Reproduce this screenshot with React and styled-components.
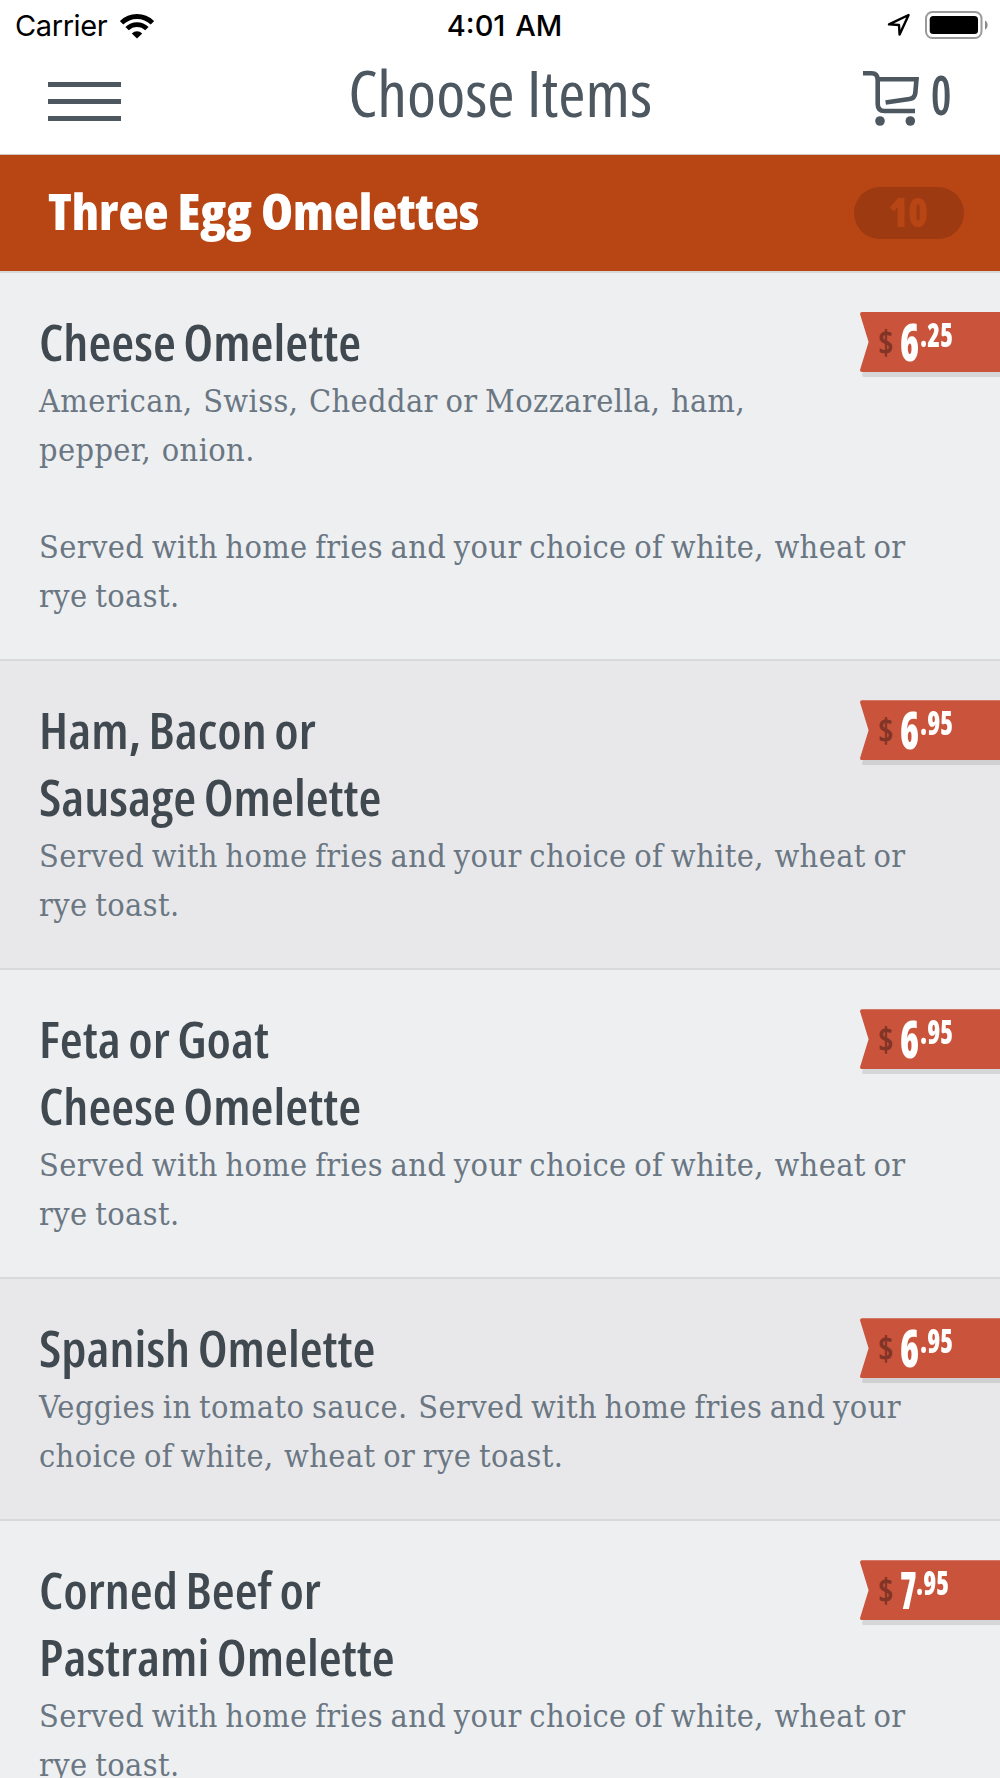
import React from "react";
import styled, { createGlobalStyle } from "styled-components";

const SERVED =
  "Served with home fries and your choice of white, wheat or\nrye toast.";

const items = [
  {
    name: "Cheese Omelette",
    desc:
      "American, Swiss, Cheddar or Mozzarella, ham,\npepper, onion.\n\n" + SERVED,
    dollars: "6",
    cents: ".25",
  },
  {
    name: "Ham, Bacon or\nSausage Omelette",
    desc: SERVED,
    dollars: "6",
    cents: ".95",
  },
  {
    name: "Feta or Goat\nCheese Omelette",
    desc: SERVED,
    dollars: "6",
    cents: ".95",
  },
  {
    name: "Spanish Omelette",
    desc:
      "Veggies in tomato sauce. Served with home fries and your\nchoice of white, wheat or rye toast.",
    dollars: "6",
    cents: ".95",
  },
  {
    name: "Corned Beef or\nPastrami Omelette",
    desc: SERVED,
    dollars: "7",
    cents: ".95",
  },
];

function WifiIcon() {
  return (
    <svg width="34" height="25" viewBox="0 0 34 25">
      <g fill="none" stroke="#000" strokeWidth="4.8">
        <path d="M1.6 8.8 A22 22 0 0 1 32.4 8.8" />
        <path d="M7.1 14.6 A14.2 14.2 0 0 1 26.9 14.6" />
      </g>
      <path d="M11.8 19.4 A7.6 7.6 0 0 1 22.2 19.4 L17 24.6 Z" />
    </svg>
  );
}

function LocationIcon() {
  return (
    <svg width="24" height="24" viewBox="0 0 24 24">
      <path
        d="M21.6 2 L2 11.4 L12 12 L12.6 21.6 Z"
        fill="none"
        stroke="#000"
        strokeWidth="2.4"
        strokeLinejoin="round"
      />
    </svg>
  );
}

function BatteryIcon() {
  return (
    <svg width="64" height="28" viewBox="0 0 64 28">
      <rect x="1" y="1" width="55.5" height="26" rx="6.5" fill="#fff" stroke="#9a9a9a" strokeWidth="2" />
      <rect x="4.7" y="4.9" width="48.3" height="18.2" rx="3.6" />
      <path d="M60 9.4 A5.5 5.5 0 0 1 60 18.8 Z" fill="#8a8a8a" />
    </svg>
  );
}

function CartIcon() {
  return (
    <svg width="58" height="58" viewBox="0 0 58 58">
      <g fill="none" stroke="#4d575f" strokeWidth="4.6">
        <path d="M0 3.3 H8.5 Q14.7 3.3 14.7 10 V34 Q14.7 41 21.5 41 H52" />
        <path d="M14.7 9.3 H53.5 L52.3 23 Q51.8 28.2 46.5 29 L22.6 32.6" />
      </g>
      <circle cx="17" cy="51" r="4.8" fill="#4d575f" />
      <circle cx="47.3" cy="51" r="4.8" fill="#4d575f" />
    </svg>
  );
}

// a little extra room after a comma or full stop
function Description({ text }) {
  return (
    <Desc>
      {text.split("\n").map((line, n) => (
        <DescLine key={n}>
          {line.split(/(?<=[,.] )/).map((part, i) => (
            <Phrase key={i} $first={i === 0}>
              {part}
            </Phrase>
          ))}
        </DescLine>
      ))}
    </Desc>
  );
}

function Item({ item }) {
  return (
    <ItemRow>
      <ItemName>{item.name}</ItemName>
      <Description text={item.desc} />
      <PriceTag>
        <Ribbon>
          <Currency>$</Currency>
          <Dollars $narrow={item.dollars === "7"}>{item.dollars}</Dollars>
          <Cents>{item.cents}</Cents>
        </Ribbon>
      </PriceTag>
    </ItemRow>
  );
}

function App() {
  return (
    <Screen>
      <GlobalStyle />
      <StatusBar>
        <Carrier>
          Carrier
          <WifiIcon />
        </Carrier>
        <Clock>4:01 AM</Clock>
        <StatusIcons>
          <LocationIcon />
          <BatteryIcon />
        </StatusIcons>
      </StatusBar>
      <Navbar>
        <MenuButton aria-label="Menu">
          <span />
          <span />
          <span />
        </MenuButton>
        <PageTitle>Choose Items</PageTitle>
        <CartButton>
          <CartIcon />
          <CartCount>0</CartCount>
        </CartButton>
      </Navbar>
      <SectionHeader>
        <SectionTitle>Three Egg Omelettes</SectionTitle>
        <Badge>10</Badge>
      </SectionHeader>
      <List>
        {items.map((item) => (
          <Item key={item.name} item={item} />
        ))}
      </List>
    </Screen>
  );
}

const GlobalStyle = createGlobalStyle`
  * {
    box-sizing: border-box;
    margin: 0;
    padding: 0;
  }
  body {
    background: #fff;
    overflow: hidden;
  }
  svg {
    display: block;
    flex: none;
  }
`;

const Screen = styled.div`
  width: 1000px;
  height: 1778px;
  overflow: hidden;
  background: #fff;
  font-family: "Open Sans", sans-serif;
`;

const StatusBar = styled.div`
  display: grid;
  grid-template-columns: 1fr auto 1fr;
  align-items: center;
  height: 50px;
  padding: 0 11px 0 15px;
  font-family: Inter, sans-serif;
  font-size: 29px;
  line-height: 50px;
  color: #000;
`;

const Carrier = styled.div`
  display: flex;
  align-items: center;
  gap: 13px;
  padding-top: 1px;
  letter-spacing: -0.4px;
`;

const Clock = styled.div`
  margin-right: -5px;
  padding-top: 1px;
  font-weight: 550;
  word-spacing: 2px;
`;

const StatusIcons = styled.div`
  display: flex;
  align-items: center;
  justify-content: flex-end;
  gap: 14px;
  padding-bottom: 2px;
`;

const Navbar = styled.div`
  display: grid;
  grid-template-columns: 1fr auto 1fr;
  height: 105px;
  padding: 0 47px 0 48px;
  border-bottom: 1px solid #cfc5bf;
  color: #4d575f;
`;

const MenuButton = styled.button`
  display: flex;
  flex-direction: column;
  gap: 12px;
  width: 73px;
  margin-top: 32px;
  border: 0;
  background: none;

  span {
    height: 5px;
    background: #4d575f;
  }
`;

const PageTitle = styled.h1`
  font-size: 63px;
  font-weight: 400;
  font-stretch: 75%;
  line-height: 86px;
  transform: scaleX(1.047);
`;

const CartButton = styled.div`
  display: flex;
  justify-content: flex-end;
  gap: 8px;
  padding-top: 20px;
`;

const CartCount = styled.span`
  width: 24px;
  font-size: 54px;
  font-weight: 600;
  font-stretch: 75%;
  line-height: 48px;
  transform: scaleX(0.86);
`;

const SectionHeader = styled.div`
  display: flex;
  align-items: center;
  justify-content: space-between;
  height: 116px;
  padding: 0 36px 0 48px;
  background: #b84614;
`;

const SectionTitle = styled.h2`
  padding-bottom: 4px;
  font-size: 50px;
  font-weight: 800;
  font-stretch: 75%;
  color: #fff;
  transform: scaleX(1.034);
  transform-origin: left;
`;

const Badge = styled.span`
  width: 110px;
  height: 52px;
  border-radius: 26px;
  background: #9d3a11;
  color: #b84614;
  font-size: 40px;
  font-weight: 800;
  font-stretch: 75%;
  line-height: 50px;
  text-align: center;
  text-indent: -2px;
`;

const List = styled.ul`
  list-style: none;
  border-top: 2px solid #d8d9db;
`;

const ItemRow = styled.li`
  position: relative;
  padding: 36px 39px 38.5px;
  border-bottom: 2px solid #d8d9db;
  background: #eeeff1;

  &:nth-child(even) {
    background: #e8e8ea;
  }
`;

const ItemName = styled.h3`
  font-size: 50px;
  font-weight: 600;
  font-stretch: 75%;
  line-height: 67px;
  word-spacing: -2px;
  color: #404950;
  white-space: pre-line;
  transform: scaleX(1.052);
  transform-origin: left;
`;

const Desc = styled.p`
  margin: 1px -39px 0 0;
  font-family: "DejaVu Serif Condensed", "DejaVu Serif", serif;
  font-size: 32.2px;
  line-height: 48.75px;
  letter-spacing: 0.4px;
  word-spacing: -2px;
  color: #6a7783;
`;

const DescLine = styled.span`
  display: block;
  min-height: 48.75px;
  white-space: pre;
`;

const Phrase = styled.span`
  margin-left: ${(p) => (p.$first ? 0 : "3px")};
`;

const PriceTag = styled.div`
  position: absolute;
  top: 39px;
  right: 0;
  filter: drop-shadow(2px 5px 0.5px rgba(0, 0, 0, 0.1));
`;

const Ribbon = styled.div`
  display: flex;
  width: 140px;
  height: 60px;
  padding-left: 18px;
  background: #ca533b;
  clip-path: path("M2 0 H140 V60 H2 Q0 60 0 58 L8.6 30 L0 2 Q0 0 2 0 Z");
  font-weight: 800;
  font-stretch: 75%;
  color: #fff;
`;

const Currency = styled.span`
  width: 22px;
  font-size: 33px;
  font-weight: 700;
  line-height: 61px;
  color: #823427;
`;

const Dollars = styled.span`
  width: ${(p) => (p.$narrow ? "16px" : "20px")};
  font-size: 51px;
  line-height: 58px;
  transform: scaleX(${(p) => (p.$narrow ? 0.66 : 0.76)});
  transform-origin: left;
`;

const Cents = styled.span`
  font-size: 33.5px;
  line-height: 44px;
  transform: scaleX(0.78);
  transform-origin: left;
`;

export default App;
